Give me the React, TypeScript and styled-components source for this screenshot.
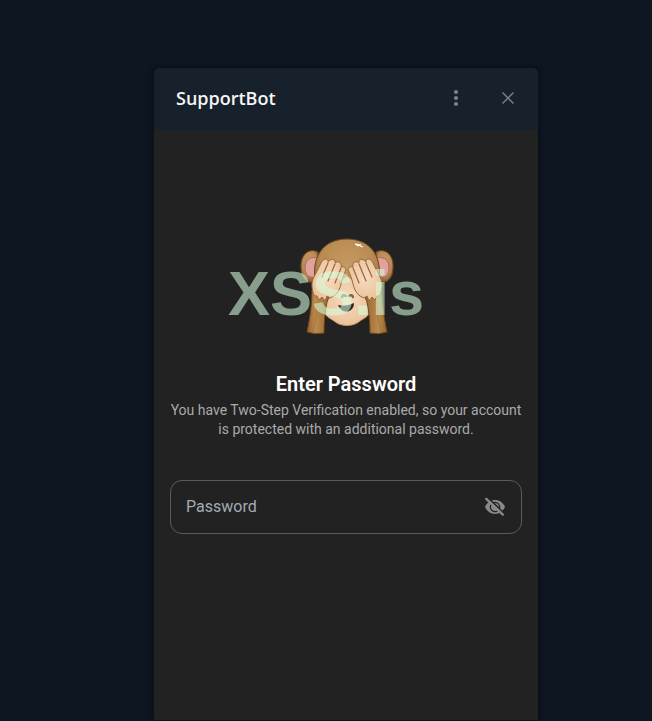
import React, { useState } from "react";
import styled, { createGlobalStyle } from "styled-components";

const GlobalStyle = createGlobalStyle`
  * { box-sizing: border-box; }
  body { margin: 0; background: #0e1621; }
`;

const Page = styled.div`
  min-height: 100vh;
  display: flex;
  justify-content: center;
  padding: 68px 0 1px 40px;
  background: #0e1621;
  font-family: Roboto, sans-serif;
`;

const Panel = styled.section`
  display: flex;
  flex-direction: column;
  width: 100%;
  max-width: 384px;
  border-radius: 6px 6px 0 0;
  overflow: hidden;
  background: #222222;
  box-shadow: 0 0 6px rgba(0, 0, 0, 0.5);
`;

const Header = styled.header`
  display: flex;
  align-items: center;
  gap: 28px;
  height: 62px;
  padding: 0 18px 2px 22px;
  background: #17212b;
`;

const BotName = styled.h1`
  flex: 1;
  margin: 0;
  font: 600 18px/24px "Open Sans", sans-serif;
  color: #f5f5f5;
`;

const IconButton = styled.button<{ $color: string }>`
  display: flex;
  padding: 0;
  border: 0;
  background: none;
  color: ${(p) => p.$color};
  cursor: pointer;
`;

const Content = styled.main`
  display: flex;
  flex-direction: column;
  align-items: center;
  padding: 106px 16px 32px;
`;

const Picture = styled.div`
  position: relative;
  display: flex;
  justify-content: center;
  width: 100%;
`;

const Watermark = styled.span`
  position: absolute;
  left: 50%;
  top: 21px;
  margin-left: -118px;
  font: 700 63px/72px "Liberation Sans", sans-serif;
  color: rgba(212, 255, 222, 0.56);
`;

const Title = styled.h2`
  margin: 34px 0 0;
  font-size: 20px;
  font-weight: 600;
  line-height: 28px;
  color: #ffffff;
`;

const Description = styled.p`
  margin: 3px 0 0;
  font-size: 14px;
  line-height: 19px;
  text-align: center;
  color: #aaaaaa;
`;

const Field = styled.div`
  display: flex;
  align-items: center;
  width: 100%;
  height: 54px;
  margin-top: 41px;
  padding: 0 14px 0 15px;
  border: 1px solid #5b5b5a;
  border-radius: 12px;
`;

const PasswordInput = styled.input`
  flex: 1;
  min-width: 0;
  padding: 0;
  border: 0;
  outline: 0;
  background: transparent;
  font: 400 16px/24px Roboto, sans-serif;
  color: #ffffff;
  &::placeholder { color: #a2acb4; opacity: 1; }
`;

const ArmAndHand = () => (
  <>
    <path d="M14 54c0 15-2 27-5 42q8 3 17 1c0-12 1-21 3-31l4-10Z" fill="url(#arm)" stroke="#704618" />
    <path d="M19 66q0 15-4 30" fill="none" stroke="#a9763e" />
    <path
      d="M15 56c-2-7-1-12 2-17l6-12c2-5 8-5 7-1 3-4 8-3 7 1 4-3 7 0 6 4 3-1 6 1 4 5l-3 8c-2 8-3 12-8 16l-4 2-3-2-2 5-3-4-3 3-2-4c-2 0-4-1-4-4Z"
      fill="url(#skin)"
      stroke="#95683d"
    />
    <path d="m30 27-6 14m13-13-7 17m13-13-6 15" fill="none" stroke="#9c6a45" strokeWidth="1.3" strokeLinecap="round" />
  </>
);

const Monkey = () => (
  <svg width="100" height="100" viewBox="-2 0 100 100" aria-hidden="true">
    <defs>
      <radialGradient id="fur" cx="50%" cy="38%" r="60%">
        <stop offset="0" stopColor="#c59a62" />
        <stop offset="0.7" stopColor="#b88b53" />
        <stop offset="1" stopColor="#8b5d30" />
      </radialGradient>
      <linearGradient id="arm" x1="0" x2="1">
        <stop offset="0" stopColor="#93632f" />
        <stop offset="0.35" stopColor="#bb8a4d" />
        <stop offset="1" stopColor="#94632f" />
      </linearGradient>
      <radialGradient id="skin" cx="50%" cy="45%" r="65%">
        <stop offset="0" stopColor="#f7dcbf" />
        <stop offset="1" stopColor="#e8bd94" />
      </radialGradient>
    </defs>
    <g stroke="#70471f">
      <path d="M20 16C9 11 2 21 3 32c0 11 7 17 16 13Z" fill="url(#fur)" />
      <path d="M78 16c11-5 18 5 17 16 0 11-7 17-16 13Z" fill="url(#fur)" />
    </g>
    <path d="M19 22c-8-2-12 3-12 10 0 8 5 10 10 9Z" fill="#e3a19e" stroke="#a36d59" />
    <path d="M79 22c8-2 12 3 12 10 0 8-5 10-10 9Z" fill="#e3a19e" stroke="#a36d59" />
    <path d="M17 42C14 20 26 3 49 3s35 17 32 39c1 14-4 23-12 30H29c-8-7-13-16-12-30Z" fill="url(#fur)" stroke="#70471f" />
    <path d="M37 50c5-3 7-8 12-10 5 2 7 7 12 10 3 9 11 14 11 22 1 8-6 10-10 13-7 6-19 6-26 0-4-3-11-5-10-13 0-8 8-13 11-22Z" fill="url(#skin)" stroke="#c5905e" />
    <path d="M44 61q1-3 4-1M51 60q3-2 4 1" fill="none" stroke="#80674e" strokeWidth="2.4" strokeLinecap="round" />
    <path d="M40 69q8 2 16-2c0 10-12 12-16 2Z" fill="#2b2424" />
    <ArmAndHand />
    <g transform="translate(98 0) scale(-1 1)">
      <ArmAndHand />
    </g>
    <path d="m57 8 6 1-3 1Zm5 2 3 1" fill="#fff" stroke="#fff" />
  </svg>
);

const DotsIcon = () => (
  <svg width="24" height="24" viewBox="0 0 24 24" fill="currentColor">
    <circle cx="12" cy="6" r="2.1" />
    <circle cx="12" cy="12" r="2.1" />
    <circle cx="12" cy="18" r="2.1" />
  </svg>
);

const CloseIcon = () => (
  <svg width="24" height="24" viewBox="0 0 24 24" fill="none" stroke="currentColor" strokeWidth="1.4">
    <path d="m6.5 6.5 11 11m0-11-11 11" />
  </svg>
);

const EyeOffIcon = () => (
  <svg width="24" height="24" viewBox="0 0 24 24">
    <path d="M2 12C4 7.5 7.7 5.1 12 5.1S20 7.5 22 12c-2 4.5-5.7 6.9-10 6.9S4 16.500 2 12Z" fill="currentColor" />
    <path d="M8.2 9.500a4.600 4.600 0 0 0 6.300 6.400" fill="none" stroke="#222222" strokeWidth="1.2" />
    <path d="M11 7.600a4.700 4.700 0 0 1 5.600 5.600" fill="none" stroke="#222222" strokeWidth="1.2" />
    <path d="m5 2.800 16 15.200" stroke="#222222" strokeWidth="1.6" />
    <path d="m3.300 3.900 16.500 15.700" stroke="currentColor" strokeWidth="2.300" strokeLinecap="round" />
  </svg>
);

export default function App() {
  const [visible, setVisible] = useState(false);
  return (
    <>
      <GlobalStyle />
      <Page>
        <Panel>
          <Header>
            <BotName>SupportBot</BotName>
            <IconButton $color="#768391" aria-label="Menu">
              <DotsIcon />
            </IconButton>
            <IconButton $color="#768391" aria-label="Close">
              <CloseIcon />
            </IconButton>
          </Header>
          <Content>
            <Picture>
              <Monkey />
              <Watermark>XSS.is</Watermark>
            </Picture>
            <Title>Enter Password</Title>
            <Description>
              You have Two-Step Verification enabled, so your account is protected with an additional password.
            </Description>
            <Field>
              <PasswordInput
                type={visible ? "text" : "password"}
                placeholder="Password"
                aria-label="Password"
              />
              <IconButton
                $color="#8a8a8a"
                aria-label="Show password"
                onClick={() => setVisible(!visible)}
              >
                <EyeOffIcon />
              </IconButton>
            </Field>
          </Content>
        </Panel>
      </Page>
    </>
  );
}
